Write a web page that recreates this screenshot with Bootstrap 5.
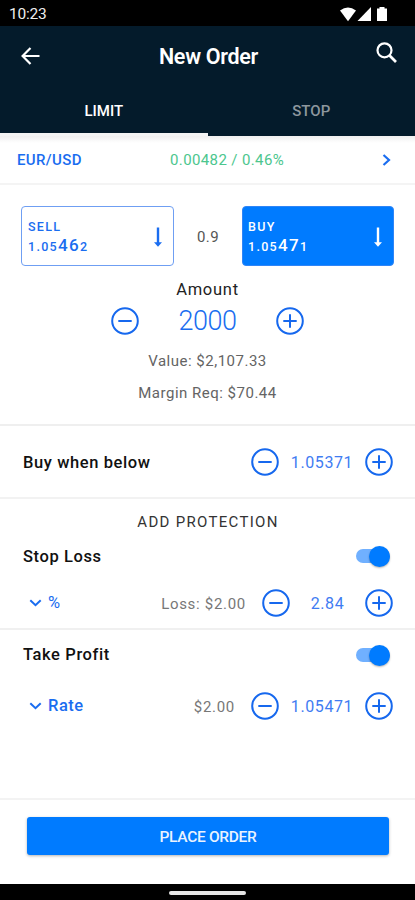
<!DOCTYPE html>
<html lang="en">
<head>
<meta charset="utf-8">
<meta name="viewport" content="width=device-width, initial-scale=1">
<title>New Order</title>
<link href="https://cdn.jsdelivr.net/npm/bootstrap@5.3.0/dist/css/bootstrap.min.css" rel="stylesheet">
<style>
  :root { --blue: #1a6df0; --fill: #007bff; --navy: #041b2b; }
  body { font-family: Roboto, "Liberation Sans", sans-serif; background: #fff; color: #111; line-height: 20px; }
  svg { display: block; flex: none; }
  .screen { width: 415px; height: 900px; overflow: hidden; }
  .status-bar { height: 26px; background: #000; color: #eee; font-size: 15.500px; letter-spacing: -.25px; padding: 2px 27px 0 9px; }
  .app-bar { height: 60px; padding: 0 18px 0 21px; }
  .navy { background: var(--navy); color: #fff; }
  .app-title { font-size: 21.5px; font-weight: 600; letter-spacing: -.3px; padding: 2px 0 0 1px; }
  .tabs-row { height: 50px; font-size: 15px; font-weight: 500; }
  .tab-item { border-bottom: 3px solid transparent; padding-top: 3px; color: #8d979e; text-decoration: none; }
  .tab-item.active { color: #fff; border-bottom-color: #f4f4f4; }
  .pair-row { height: 49px; padding: 1px 24px 0 17px; border-bottom: 2px solid #f4f4f4; font-size: 15px; background: linear-gradient(#f0efef, #fff 7px); }
  .pair { color: var(--blue); font-weight: 500; width: 153px; letter-spacing: .38px; }
  .change { color: #4cc68e; letter-spacing: .38px; }
  .ticket { height: 241px; padding-top: 21px; border-bottom: 2px solid #efefef; }
  .quotes { padding: 0 21px; }
  .quote { width: 153px; height: 60px; border-radius: 4px; border: 1.5px solid #6f9ff3; color: var(--blue); background: #fff; padding: 2px 11px 0 6px; text-align: left; }
  .quote.buy { width: 152px; background: var(--fill); color: #fff; border-color: #2f85f7; padding-left: 5px; }
  .side { font-size: 12.5px; font-weight: 500; letter-spacing: 1.3px; line-height: 17px; }
  .price { font-size: 12.5px; line-height: 20px; letter-spacing: 1.3px; font-weight: 500; }
  .price b { font-size: 17px; font-weight: 500; letter-spacing: 1.35px; }
  .spread { font-size: 15px; letter-spacing: .4px; color: #555; padding-top: 2px; }
  .amount-label { font-size: 16.5px; letter-spacing: .75px; color: #222; padding-top: 14px; }
  .amount { width: 193px; height: 41px; color: var(--blue); font-size: 27px; font-weight: 300; letter-spacing: -.5px; }
  .note { font-size: 15px; letter-spacing: .5px; color: #646464; height: 32px; line-height: 40px; }
  .line-label { font-size: 16.5px; font-weight: 500; letter-spacing: .6px; }
  .trigger { height: 73px; padding: 0 22px 0 23px; border-bottom: 2px solid #f2f2f2; }
  .trigger .line-label, .value { padding-top: 2px; }
  .stop .line-label { padding-top: 1px; }
  .value { color: #3f7cf2; font-size: 16px; letter-spacing: .6px; width: 86px; text-align: center; }
  .value.short { width: 75px; }
  .hint { font-size: 15px; letter-spacing: .7px; color: #777; padding-top: 1px; }
  .section-title { height: 44px; line-height: 47px; font-size: 15px; letter-spacing: 1.3px; color: #333; padding-left: 1px; }
  .toggle-row { padding: 0 25px 0 23px; height: 26px; }
  .setting { padding: 20px 22px 0 29px; color: var(--blue); }
  .mode { font-size: 16.5px; font-weight: 500; letter-spacing: .5px; margin-left: 6px; }
  .mode.light { font-weight: 400; }
  .switch-track { width: 34px; height: 14px; border-radius: 7px; background: #70b0ff; }
  .switch-knob { width: 21px; height: 21px; border-radius: 50%; background: var(--fill); box-shadow: 0 1px 2px rgba(0,0,0,.3); }
  .stop { height: 87px; border-bottom: 2px solid #f0f0f0; }
  .profit { padding-top: 12px; }
  .profit .setting { padding-top: 24px; }
  .footer-bar { height: 86px; border-top: 2px solid #f3f3f3; padding: 17px 26px 0 27px; }
  .place { height: 38px; border-radius: 3px; background: var(--fill); border: 0; color: #eaf3ff; font-size: 15.5px; letter-spacing: -.3px; font-weight: 500; padding-top: 2px; box-shadow: 0 1px 3px rgba(0,0,0,.3); }
  .home-bar { height: 16px; background: #000; padding-top: 2px; }
  .home-pill { width: 77px; height: 4px; border-radius: 2px; background: #e6e6e6; }
</style>
<script src="https://cdn.jsdelivr.net/npm/bootstrap@5.3.0/dist/js/bootstrap.bundle.min.js"></script>
</head>
<body>
<svg width="0" height="0" class="position-absolute">
  <symbol id="minus" viewBox="0 0 28 28"><g fill="none" stroke="#1668ee" stroke-width="2"><circle cx="14" cy="14" r="12.8"/><path d="M7.3 14h13.4"/></g></symbol>
  <symbol id="plus" viewBox="0 0 28 28"><g fill="none" stroke="#1668ee" stroke-width="2"><circle cx="14" cy="14" r="12.8"/><path d="M7.3 14h13.4M14 7.3v13.4"/></g></symbol>
  <symbol id="down" viewBox="0 0 8 20"><path d="M4 .5V16" fill="none" stroke="currentColor" stroke-width="2.4"/><path d="M0 15.2h8L4 19.8z" fill="currentColor"/></symbol>
  <symbol id="chev" viewBox="0 0 12 8"><path d="M.8 1.2 6 6.2l5.200-5" fill="none" stroke="currentColor" stroke-width="2"/></symbol>
</svg>
<div class="screen d-flex flex-column">
  <div class="status-bar d-flex align-items-center justify-content-between">
    <span>10:23</span>
    <svg width="48" height="15" viewBox="0 0 48 15" fill="#fff"><path d="M0 3.600Q8-2.800 16 3.600L8 14.300z"/><path d="M31 0v14H17.500z"/><path d="M39.500 0h5v1.500H47V14H37V1.500h2.500z"/></svg>
  </div>
  <header class="navy">
    <div class="app-bar d-flex align-items-center justify-content-between">
      <svg width="19" height="18" viewBox="0 0 19 18" fill="none" stroke="#fff" stroke-width="2.200"><path d="M18.500 9H2M9.500 1 1.600 9l7.900 8"/></svg>
      <span class="app-title">New Order</span>
      <svg width="21" height="21" viewBox="0 0 21 21" class="mb-2" fill="none" stroke="#fff" stroke-width="2.200"><circle cx="8.500" cy="8.300" r="7"/><path d="m13.300 13.200 6.700 6.800" stroke-width="2.700"/></svg>
    </div>
    <nav class="tabs-row d-flex">
      <a class="tab-item active w-50 d-flex align-items-center justify-content-center">LIMIT</a>
      <a class="tab-item w-50 d-flex align-items-center justify-content-center">STOP</a>
    </nav>
  </header>
  <div class="pair-row d-flex align-items-center">
    <span class="pair">EUR/USD</span>
    <span class="change">0.00482 / 0.46%</span>
    <svg class="ms-auto" width="9" height="12" viewBox="0 0 9 12" fill="none" stroke="#1a6df0" stroke-width="2.200"><path d="m1.500 1 5.500 5-5.500 5"/></svg>
  </div>
  <section class="ticket text-center">
    <div class="quotes d-flex align-items-center">
      <button class="quote sell d-flex align-items-center justify-content-between">
        <span><span class="side d-block">SELL</span><span class="price d-block">1.05<b>46</b>2</span></span>
        <svg width="8" height="20"><use href="#down"/></svg>
      </button>
      <span class="spread flex-fill">0.9</span>
      <button class="quote buy d-flex align-items-center justify-content-between">
        <span><span class="side d-block">BUY</span><span class="price d-block">1.05<b>47</b>1</span></span>
        <svg width="8" height="20"><use href="#down"/></svg>
      </button>
    </div>
    <div class="amount-label">Amount</div>
    <div class="amount d-flex align-items-center justify-content-between mx-auto">
      <svg width="28" height="28"><use href="#minus"/></svg><span>2000</span><svg width="28" height="28"><use href="#plus"/></svg>
    </div>
    <div class="note">Value: $2,107.33</div>
    <div class="note">Margin Req: $70.44</div>
  </section>
  <section class="trigger d-flex align-items-center">
    <span class="line-label me-auto">Buy when below</span>
    <svg width="28" height="28"><use href="#minus"/></svg><span class="value">1.05371</span><svg width="28" height="28"><use href="#plus"/></svg>
  </section>
  <div class="section-title text-center">ADD PROTECTION</div>
  <section class="stop">
    <div class="toggle-row d-flex align-items-center justify-content-between">
      <span class="line-label">Stop Loss</span>
      <span class="switch-track d-flex align-items-center justify-content-end"><span class="switch-knob"></span></span>
    </div>
    <div class="setting d-flex align-items-center">
      <svg width="13" height="8"><use href="#chev"/></svg><span class="mode light me-auto">%</span>
      <span class="hint me-3">Loss: $2.00</span>
      <svg width="28" height="28"><use href="#minus"/></svg><span class="value short">2.84</span><svg width="28" height="28"><use href="#plus"/></svg>
    </div>
  </section>
  <section class="profit flex-fill">
    <div class="toggle-row d-flex align-items-center justify-content-between">
      <span class="line-label">Take Profit</span>
      <span class="switch-track d-flex align-items-center justify-content-end"><span class="switch-knob"></span></span>
    </div>
    <div class="setting d-flex align-items-center">
      <svg width="13" height="8"><use href="#chev"/></svg><span class="mode me-auto">Rate</span>
      <span class="hint me-3">$2.00</span>
      <svg width="28" height="28"><use href="#minus"/></svg><span class="value">1.05471</span><svg width="28" height="28"><use href="#plus"/></svg>
    </div>
  </section>
  <div class="footer-bar"><button class="place w-100">PLACE ORDER</button></div>
  <div class="home-bar d-flex align-items-center justify-content-center"><span class="home-pill"></span></div>
</div>
</body>
</html>
